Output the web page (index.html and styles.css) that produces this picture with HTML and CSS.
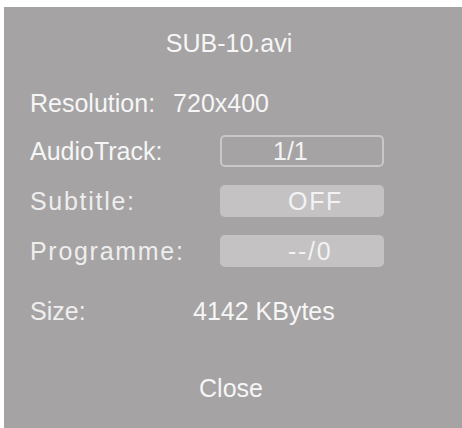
FILE: index.html
```html
<!DOCTYPE html>
<html>
<head>
<meta charset="utf-8">
<link rel="stylesheet" href="styles.css">
</head>
<body>
<div class="panel">
  <div class="title">SUB-10.avi</div>
  <div class="row row-res">
    <span class="label">Resolution:</span>
    <span class="value">720x400</span>
  </div>
  <div class="row row-audio">
    <span class="label label-box">AudioTrack:</span>
    <span class="box box-outline">1/1</span>
  </div>
  <div class="row row-box">
    <span class="label label-box spaced dim">Subtitle:</span>
    <span class="box box-fill spaced">OFF</span>
  </div>
  <div class="row row-box">
    <span class="label label-box spaced dim">Programme:</span>
    <span class="box box-fill spaced">--/0</span>
  </div>
  <div class="row row-size">
    <span class="label label-size dim">Size:</span>
    <span class="value">4142 KBytes</span>
  </div>
  <div class="close">Close</div>
</div>
</body>
</html>
```
FILE: styles.css
```css
html, body {
  margin: 0;
  padding: 0;
  background: #ffffff;
}
body {
  width: 462px;
  height: 428px;
  overflow: hidden;
  font-family: "Liberation Sans", Arial, sans-serif;
  font-size: 25px;
  color: #f6f6f6;
}
.panel {
  margin: 7px 0 0 4px;
  height: 421px;
  background: #a5a3a4;
  box-sizing: border-box;
  padding: 20px 34px 0 26px;
  display: flex;
  flex-direction: column;
}
.title {
  line-height: 32px;
  height: 32px;
  text-align: center;
}
.row {
  display: flex;
  align-items: center;
  height: 32px;
  line-height: 32px;
}
.row-res {
  margin-top: 28px;
  gap: 18px;
}
.row-audio {
  margin-top: 16px;
}
.row-box {
  margin-top: 18px;
}
.row-size {
  margin-top: 28px;
}
.label-box {
  width: 190px;
  flex: none;
}
.label-size {
  width: 163px;
  flex: none;
}
.spaced {
  letter-spacing: 1.7px;
}
.dim {
  color: #eeeeee;
}
.box {
  width: 164px;
  height: 32px;
  box-sizing: border-box;
  border-radius: 5px;
  flex: none;
  color: #f3f3f3;
}
.box-outline {
  border: 2px solid #c9c7c8;
  padding-left: 51px;
  line-height: 28px;
}
.box-fill {
  background: #c4c2c3;
  padding-left: 68px;
}
.close {
  margin-top: 45px;
  line-height: 32px;
  text-align: center;
  padding-left: 4px;
}
```
